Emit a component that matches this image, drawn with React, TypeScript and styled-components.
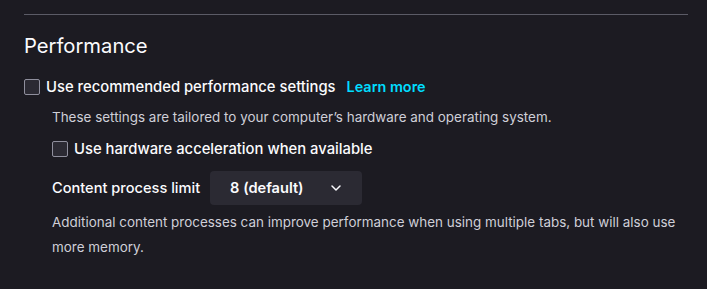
import React from "react";
import styled, { createGlobalStyle } from "styled-components";

const Global = createGlobalStyle`
  html, body { margin: 0; padding: 0; background: #1c1b22; }
  body { font-family: Inter, "Noto Sans", sans-serif; color: #fbfbfe; -webkit-font-smoothing: antialiased; }
`;

const Page = styled.div`
  width: 707px;
  height: 289px;
  box-sizing: border-box;
  padding: 14px 19px 0 24px;
  background: #1c1b22;
`;

const Separator = styled.hr`
  margin: 0;
  border: none;
  border-top: 1px solid #5b5b66;
`;

const Heading = styled.h2`
  margin: 18px 0 0;
  font-size: 20.2px;
  font-weight: 400;
  line-height: 26px;
  color: #fbfbfe;
`;

const CheckRow = styled.label<{ $indent?: boolean }>`
  display: flex;
  align-items: center;
  gap: 6px;
  margin-left: ${(p) => (p.$indent ? "28px" : "0")};
  font-size: 14.8px;
  font-weight: 500;
  line-height: 20px;
`;

const Box = styled.span`
  width: 14px;
  height: 14px;
  border: 1px solid #8f8f9d;
  border-radius: 2px;
  background: #2b2a33;
  flex: none;
`;

const Link = styled.a`
  margin-left: 5px;
  color: #00ddff;
  font-weight: 600;
  font-size: 14.4px;
  text-decoration: none;
`;

const Description = styled.p`
  margin: 0 0 0 28px;
  font-size: 13.45px;
  line-height: 25px;
  color: #cfcfd8;
`;

const Sub = styled.div`
  display: flex;
  flex-direction: column;
`;

const SelectRow = styled.div`
  display: flex;
  align-items: center;
  gap: 10px;
  margin-left: 28px;
  font-size: 14.6px;
  font-weight: 500;
`;

const Select = styled.div`
  display: flex;
  align-items: center;
  justify-content: space-between;
  width: 152px;
  height: 34px;
  box-sizing: border-box;
  padding: 0 20px;
  border-radius: 4px;
  background: #2b2a33;
  font-weight: 600;
`;

export default function App() {
  return (
    <>
      <Global />
      <Page>
        <Separator />
        <Heading>Performance</Heading>
        <CheckRow style={{ marginTop: 18 }}>
          <Box />
          Use recommended performance settings
          <Link href="#">Learn more</Link>
        </CheckRow>
        <Sub>
          <Description style={{ marginTop: 8 }}>
            These settings are tailored to your computer’s hardware and operating system.
          </Description>
          <CheckRow $indent style={{ marginTop: 9 }}>
            <Box />
            Use hardware acceleration when available
          </CheckRow>
          <SelectRow style={{ marginTop: 12 }}>
            Content process limit
            <Select>
              8 (default)
              <svg width="12" height="8" viewBox="0 0 12 8" fill="none">
                <path d="M2 2l4 4 4-4" stroke="#fbfbfe" strokeWidth="1.5" strokeLinecap="round" strokeLinejoin="round" />
              </svg>
            </Select>
          </SelectRow>
          <Description style={{ marginTop: 5, width: 630 }}>
            Additional content processes can improve performance when using multiple tabs, but will also use more memory.
          </Description>
        </Sub>
      </Page>
    </>
  );
}
